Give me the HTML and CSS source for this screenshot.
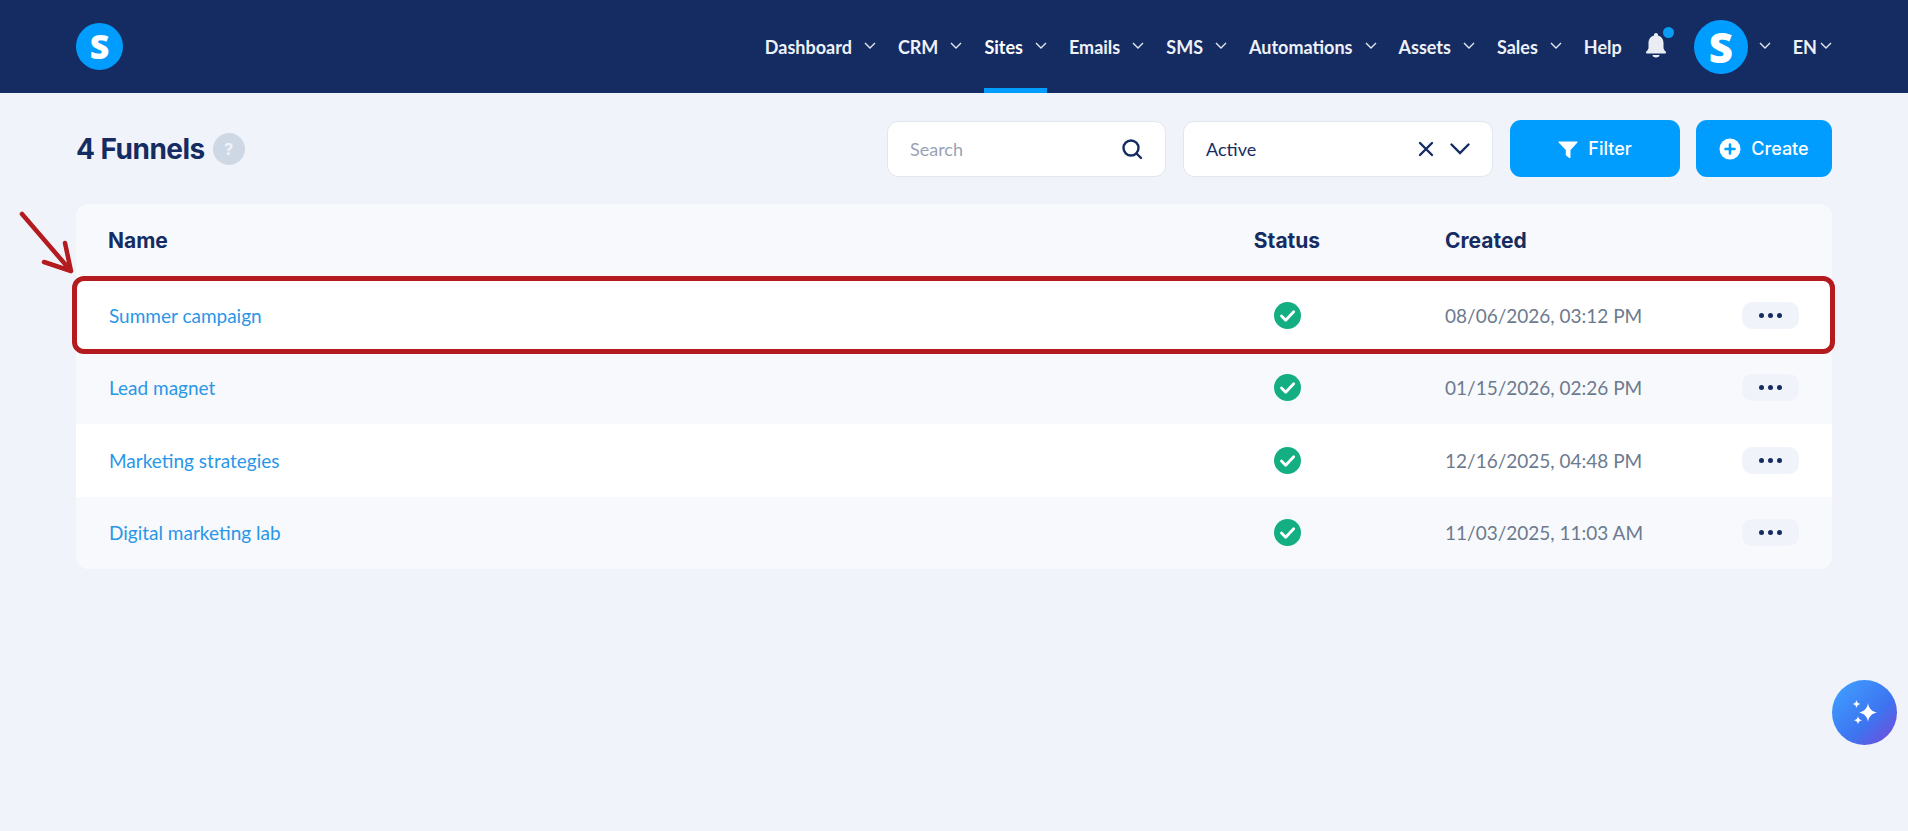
FILE: index.html
```html
<!DOCTYPE html>
<html lang="en">

<head>
    <meta charset="UTF-8">
    <title>Funnels</title>
    <link rel="stylesheet" href="styles.css">
</head>

<body>
    <header class="topbar">
        <div class="logo">S</div>
        <nav class="nav">
            <a class="nav-item">Dashboard <svg class="chev" viewBox="0 0 12 7"><path d="M1 1l5 5 5-5"/></svg></a>
            <a class="nav-item">CRM <svg class="chev" viewBox="0 0 12 7"><path d="M1 1l5 5 5-5"/></svg></a>
            <a class="nav-item active">Sites <svg class="chev" viewBox="0 0 12 7"><path d="M1 1l5 5 5-5"/></svg></a>
            <a class="nav-item">Emails <svg class="chev" viewBox="0 0 12 7"><path d="M1 1l5 5 5-5"/></svg></a>
            <a class="nav-item">SMS <svg class="chev" viewBox="0 0 12 7"><path d="M1 1l5 5 5-5"/></svg></a>
            <a class="nav-item">Automations <svg class="chev" viewBox="0 0 12 7"><path d="M1 1l5 5 5-5"/></svg></a>
            <a class="nav-item">Assets <svg class="chev" viewBox="0 0 12 7"><path d="M1 1l5 5 5-5"/></svg></a>
            <a class="nav-item">Sales <svg class="chev" viewBox="0 0 12 7"><path d="M1 1l5 5 5-5"/></svg></a>
            <a class="nav-item">Help</a>
        </nav>
        <div class="bell">
            <svg viewBox="0 0 24 26" width="24" height="26"><path fill="#e9ecf3" d="M12 1c-1.2 0-2 .9-2 2v.5C6.600 4.400 4.500 7.300 4.500 11v4.500c0 1.800-1 3-2.300 4.300-.7.700-.2 1.700.7 1.700h18.200c.9 0 1.400-1 .7-1.700-1.300-1.300-2.300-2.500-2.300-4.300V11c0-3.700-2.100-6.600-5.500-7.500V3c0-1.100-.8-2-2-2z"/><path fill="#e9ecf3" d="M8.500 23h7c0 1.300-1.200 2.400-3.500 2.400S8.500 24.300 8.500 23z"/></svg>
            <span class="bell-dot"></span>
        </div>
        <div class="avatar">S</div>
        <svg class="chev chev-user" viewBox="0 0 12 7"><path d="M1 1l5 5 5-5"/></svg>
        <a class="nav-item lang">EN <svg class="chev" viewBox="0 0 12 7"><path d="M1 1l5 5 5-5"/></svg></a>
    </header>

    <main class="content">
        <div class="toolbar">
            <h1 class="title">4 Funnels</h1>
            <span class="help">?</span>
            <div class="search">
                <span class="placeholder">Search</span>
                <svg viewBox="0 0 22 22" width="22" height="22" class="icon-line"><circle cx="10" cy="10" r="7.500"/><path d="M15.500 15.500l4.500 4.500"/></svg>
            </div>
            <div class="select">
                <span>Active</span>
                <svg viewBox="0 0 16 16" width="16" height="16" class="icon-line select-x"><path d="M2 2l12 12M14 2L2 14"/></svg>
                <svg viewBox="0 0 20 12" width="20" height="12" class="icon-line"><path d="M1.500 1.500L10 10l8.500-8.500"/></svg>
            </div>
            <button class="btn btn-filter">
                <svg viewBox="0 0 20 20" width="20" height="20"><path fill="#fff" d="M1 2.500h18c.5 0 .8.600.4 1L12.500 11v7.300c0 .7-.8 1-1.300.6l-3-2.400c-.3-.2-.4-.5-.4-.8V11L.6 3.500c-.4-.4-.1-1 .4-1z"/></svg>
                Filter
            </button>
            <button class="btn btn-create">
                <svg viewBox="0 0 22 22" width="22" height="22"><circle cx="11" cy="11" r="10.500" fill="#fff"/><path d="M11 6.500v9M6.500 11h9" stroke="#009dff" stroke-width="2.600" stroke-linecap="round"/></svg>
                Create
            </button>
        </div>

        <div class="table">
            <div class="row row-head">
                <div>Name</div>
                <div class="col-status">Status</div>
                <div class="col-created">Created</div>
                <div></div>
            </div>
            <div class="row row-white row-marked">
                <a class="name">Summer campaign</a>
                <div class="col-status"><svg class="check" viewBox="0 0 27 27"><circle cx="13.500" cy="13.500" r="13.500"/><path d="M7.500 14l4.200 4.200 8-8.400"/></svg></div>
                <div class="col-created date">08/06/2026, 03:12 PM</div>
                <button class="dots"><i></i><i></i><i></i></button>
            </div>
            <div class="row">
                <a class="name">Lead magnet</a>
                <div class="col-status"><svg class="check" viewBox="0 0 27 27"><circle cx="13.500" cy="13.500" r="13.500"/><path d="M7.500 14l4.200 4.200 8-8.400"/></svg></div>
                <div class="col-created date">01/15/2026, 02:26 PM</div>
                <button class="dots"><i></i><i></i><i></i></button>
            </div>
            <div class="row row-white">
                <a class="name">Marketing strategies</a>
                <div class="col-status"><svg class="check" viewBox="0 0 27 27"><circle cx="13.500" cy="13.500" r="13.500"/><path d="M7.500 14l4.200 4.200 8-8.400"/></svg></div>
                <div class="col-created date">12/16/2025, 04:48 PM</div>
                <button class="dots"><i></i><i></i><i></i></button>
            </div>
            <div class="row">
                <a class="name">Digital marketing lab</a>
                <div class="col-status"><svg class="check" viewBox="0 0 27 27"><circle cx="13.500" cy="13.500" r="13.500"/><path d="M7.500 14l4.200 4.200 8-8.400"/></svg></div>
                <div class="col-created date">11/03/2025, 11:03 AM</div>
                <button class="dots"><i></i><i></i><i></i></button>
            </div>
        </div>
    </main>

    <!-- hand drawn arrow on top of the screenshot -->
    <svg class="arrow" viewBox="0 0 60 70" width="60" height="70">
        <path d="M7 9l49 57M50 38l6 28-27-9" />
    </svg>

    <div class="fab">
        <svg viewBox="0 0 32 32" width="32" height="32"><path fill="#fff" d="M19 6c.8 5.500 3.500 8.300 9 9.500-5.500 1.200-8.200 4-9 9.500-.8-5.500-3.500-8.300-9-9.500 5.500-1.200 8.200-4 9-9.500z"/><path fill="#fff" d="M7.500 3c.4 2.500 1.500 3.600 4 4-2.500.4-3.600 1.500-4 4-.4-2.500-1.500-3.600-4-4 2.500-.4 3.600-1.500 4-4z"/><path fill="#fff" d="M9 19c.4 2.700 1.600 3.900 4.200 4.300-2.600.4-3.800 1.600-4.200 4.300-.4-2.700-1.600-3.900-4.200-4.300 2.600-.4 3.800-1.600 4.200-4.300z"/></svg>
    </div>
</body>

</html>
```

FILE: styles.css
```css
* {
    box-sizing: border-box;
}

html,
body {
    height: 100%;
}

body {
    margin: 0;
    background: #f0f3f9;
    color: #152c63;
    font-family: "Lato", "Liberation Sans", sans-serif;
    overflow: hidden;
    position: relative;
}

/*top bar*/

.topbar {
    align-items: center;
    background: #152c63;
    display: flex;
    height: 93px;
    padding: 0 76px;
}

.logo {
    background: #009dff;
    border-radius: 50%;
    color: #fff;
    font-family: "Open Sans", sans-serif;
    font-size: 34px;
    font-weight: 800;
    height: 47px;
    line-height: 46px;
    text-align: center;
    width: 47px;
}

.nav {
    align-items: center;
    display: flex;
    gap: 22px;
    height: 100%;
    margin-left: auto;
}

.nav-item {
    align-items: center;
    color: #eef1f7;
    display: flex;
    font-size: 18px;
    font-weight: 700;
    gap: 12px;
    height: 100%;
    position: relative;
    white-space: nowrap;
}

.nav-item.active {
    color: #fff;
}

.nav-item.active::after {
    background: #009dff;
    bottom: 0;
    content: "";
    height: 5px;
    left: 0;
    position: absolute;
    right: 0;
}

.chev {
    fill: none;
    flex: none;
    height: 7px;
    margin-top: -3px;
    stroke: #e3e7f0;
    stroke-width: 1.400;
    width: 12px;
}

.bell {
    height: 26px;
    margin-left: 22px;
    margin-top: -4px;
    position: relative;
    width: 24px;
}

.bell-dot {
    background: #0a9bf5;
    border-radius: 50%;
    height: 11px;
    position: absolute;
    right: -6px;
    top: -5px;
    width: 11px;
}

.avatar {
    background: #009dff;
    border-radius: 50%;
    color: #fff;
    font-family: "Open Sans", sans-serif;
    font-size: 42px;
    font-weight: 800;
    height: 54px;
    line-height: 53px;
    margin-left: 26px;
    text-align: center;
    width: 54px;
}

.chev-user {
    margin-left: 11px;
}

.lang {
    height: auto;
    margin-left: 22px;
    gap: 3px;
}

/*toolbar*/

.content {
    padding: 27px 76px 0;
}

.toolbar {
    align-items: center;
    display: flex;
    height: 57px;
}

.title {
    font-family: "Inter", sans-serif;
    font-size: 28px;
    font-weight: 700;
    letter-spacing: -0.5px;
    margin: 0;
}

.help {
    background: #ced8e4;
    border-radius: 50%;
    color: #f0f3f9;
    font-family: "Inter", sans-serif;
    font-size: 16px;
    font-weight: 700;
    height: 32px;
    line-height: 32px;
    margin-left: 8px;
    text-align: center;
    width: 32px;
}

.search,
.select {
    align-items: center;
    background: #fff;
    border: 1px solid #e2e6ed;
    border-radius: 11px;
    display: flex;
    font-size: 18px;
    height: 56px;
    padding: 0 22px;
}

.search {
    justify-content: space-between;
    margin-left: auto;
    width: 279px;
}

.placeholder {
    color: #9aa3b5;
}

.select {
    margin-left: 17px;
    width: 310px;
}

.select-x {
    margin-left: auto;
    margin-right: 16px;
}

.icon-line {
    fill: none;
    stroke: #152c63;
    stroke-linecap: round;
    stroke-width: 2.400;
}

.btn {
    align-items: center;
    background: #009dff;
    border: 0;
    border-radius: 11px;
    color: #fff;
    display: flex;
    font-family: "Inter", sans-serif;
    font-size: 18px;
    font-weight: 500;
    gap: 10px;
    height: 57px;
    justify-content: center;
    padding: 0;
}

.btn-filter {
    margin-left: 17px;
    width: 170px;
}

.btn-create {
    margin-left: 16px;
    width: 136px;
}

/*table*/

.table {
    background: #f7f9fc;
    border-radius: 12px;
    margin-top: 27px;
}

.row {
    align-items: center;
    display: grid;
    grid-template-columns: 1fr 160px 375px 57px;
    height: 72.500px;
    padding: 0 33px;
    position: relative;
}

.row:last-child {
    border-radius: 0 0 12px 12px;
}

.row-head {
    font-family: "Inter", sans-serif;
    font-size: 21px;
    font-weight: 700;
    height: 75px;
    padding-left: 32px;
    padding-bottom: 3px;
}

.row-white {
    background: #fff;
}

.row-marked::after {
    border: 5px solid #b31b1e;
    border-radius: 12px;
    bottom: -2px;
    content: "";
    left: -4px;
    position: absolute;
    right: -3px;
    top: -3px;
}

.name {
    color: #2a96e8;
    font-size: 19px;
}

.col-status {
    align-items: center;
    display: flex;
    justify-content: center;
}

.col-created {
    padding-left: 78px;
}

.date {
    color: #6c7a8e;
    font-size: 19px;
}

.check {
    fill: #13ae82;
    height: 27px;
    stroke: none;
    width: 27px;
}

.check path {
    fill: none;
    stroke: #fff;
    stroke-linecap: round;
    stroke-linejoin: round;
    stroke-width: 2.800;
}

.dots {
    align-items: center;
    background: #f0f3f9;
    border: 0;
    border-radius: 10px;
    display: flex;
    gap: 4px;
    height: 27px;
    justify-content: center;
    padding: 0;
    width: 57px;
}

.dots i {
    background: #152c63;
    border-radius: 50%;
    height: 5px;
    width: 5px;
}

/*things lying over the page*/

.arrow {
    fill: none;
    left: 15px;
    position: absolute;
    stroke: #b31b1e;
    stroke-linecap: round;
    stroke-linejoin: round;
    stroke-width: 4.500;
    top: 205px;
}

.fab {
    align-items: center;
    background: linear-gradient(135deg, #3f9bff 10%, #3d74f0 60%, #7a48d8 100%);
    border-radius: 50%;
    display: flex;
    height: 65px;
    justify-content: center;
    left: 1832px;
    position: absolute;
    top: 680px;
    width: 65px;
}
```
